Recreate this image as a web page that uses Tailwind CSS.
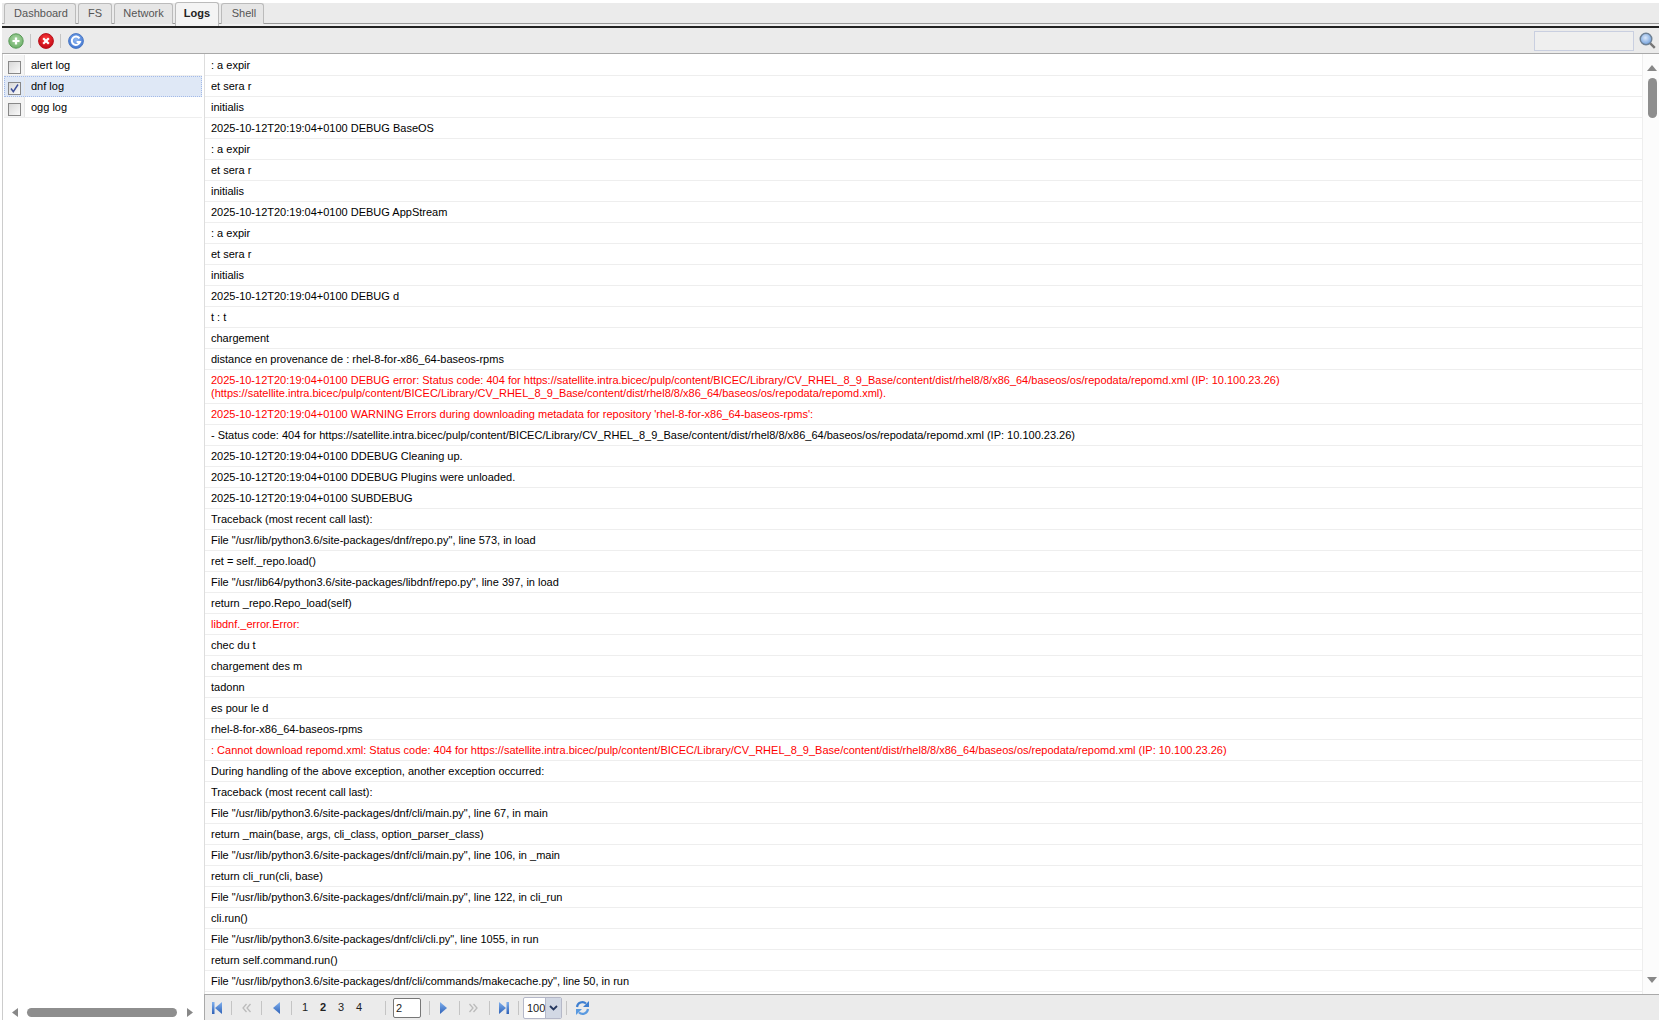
<!DOCTYPE html>
<html lang="en">
<head>
    <meta charset="UTF-8">
    <title>Logs</title>
    <script src="https://cdn.jsdelivr.net/npm/@tailwindcss/browser@4"></script>
</head>
<body class="h-screen overflow-hidden bg-white font-['Liberation_Sans',Arial,sans-serif] text-[11px] text-black">
    <svg width="0" height="0" class="absolute">
        <defs>
            <radialGradient id="gGreen" cx="50%" cy="40%" r="60%"><stop offset="0" stop-color="#b4dcae"/><stop offset="1" stop-color="#6aae66"/></radialGradient>
            <radialGradient id="gRed" cx="50%" cy="35%" r="65%"><stop offset="0" stop-color="#ff3a3a"/><stop offset="1" stop-color="#c00814"/></radialGradient>
            <radialGradient id="gBlue" cx="50%" cy="40%" r="60%"><stop offset="0" stop-color="#8fb8f2"/><stop offset="1" stop-color="#3f74d0"/></radialGradient>
            <radialGradient id="gGlass" cx="45%" cy="40%" r="60%"><stop offset="0" stop-color="#dbe8fa"/><stop offset="1" stop-color="#6f9fdc"/></radialGradient>
            <linearGradient id="gPager" x1="0" y1="0" x2="0" y2="1"><stop offset="0" stop-color="#7fb0ee"/><stop offset="1" stop-color="#2f62b8"/></linearGradient>
        </defs>
    </svg>

    <!-- Tabs -->
    <div class="h-[25px] mt-[3px] ml-[2px] bg-[#ebebeb] border-b-2 border-[#222] flex items-end pl-[2px] gap-[2px] text-[#555] [box-shadow:inset_0_-2px_0_#f0f0f0,inset_0_-3px_0_#999]">
        <div class="w-[72px] h-[21px] mb-[2px] pb-[1px] pl-[2px] flex items-center justify-center bg-[#e6e6e6] border border-b-0 border-[#bbb] rounded-t-[3px]">Dashboard</div>
        <div class="w-[34px] h-[21px] mb-[2px] pb-[1px] flex items-center justify-center bg-[#e6e6e6] border border-b-0 border-[#bbb] rounded-t-[3px]">FS</div>
        <div class="w-[59px] h-[21px] mb-[2px] pb-[1px] flex items-center justify-center bg-[#e6e6e6] border border-b-0 border-[#bbb] rounded-t-[3px]">Network</div>
        <div class="w-[44px] h-[24px] pb-[3px] flex items-center justify-center bg-[#f4f4f4] border border-b-0 border-[#bbb] rounded-t-[3px] font-bold text-[#222]">Logs</div>
        <div class="w-[43px] h-[21px] mb-[2px] pb-[1px] pl-[3px] flex items-center justify-center bg-[#e6e6e6] border border-b-0 border-[#bbb] rounded-t-[3px]">Shell</div>
    </div>

    <!-- Toolbar -->
    <div class="h-[26px] ml-[2px] bg-[#ebebeb] border-b border-[#a9a9a9] flex items-center pl-[6px]">
        <svg width="16" height="16" viewBox="0 0 16 16"><circle cx="8" cy="8" r="7.200" fill="url(#gGreen)" stroke="#5a9a58"/><path d="M8 4.500v7M4.500 8h7" stroke="#fff" stroke-width="2.200"/></svg>
        <div class="w-px h-[14px] bg-[#c4c4c4] ml-[6px] mr-[7px]"></div>
        <svg width="16" height="16" viewBox="0 0 16 16"><circle cx="8" cy="8" r="7.400" fill="url(#gRed)" stroke="#b8121c"/><path d="M5.200 5.200l5.600 5.600M10.800 5.200l-5.600 5.600" stroke="#fff" stroke-width="2.200"/></svg>
        <div class="w-px h-[14px] bg-[#c4c4c4] ml-[6px] mr-[7px]"></div>
        <svg width="16" height="16" viewBox="0 0 16 16"><circle cx="8" cy="8" r="7.400" fill="url(#gBlue)" stroke="#4a78c4"/><path d="M11.500 5.400A4.200 4.200 0 1 0 12 9H8.600" fill="none" stroke="#fff" stroke-width="2"/></svg>
        <div class="ml-auto w-[100px] h-[20px] bg-[#efefef] border border-[#c9cfe0]"></div>
        <svg class="ml-[5px] mr-[3px]" width="17" height="17" viewBox="0 0 17 17"><path d="M10.800 10.800l5 5" stroke="#777" stroke-width="2.400"/><circle cx="7" cy="7" r="5.800" fill="url(#gGlass)" stroke="#6e8094" stroke-width="1.400"/></svg>
    </div>

    <div class="flex h-[966px]">
        <!-- Left list -->
        <div class="w-[201px] ml-[2px] border-l border-[#ccc] flex flex-col shrink-0">
            <div class="flex-1 pl-[1px] pr-[1px] pt-[1px]">
                <div class="h-[21px] flex border-b border-[#eee]">
                    <div class="w-[21px] pt-[4px] bg-[#f5f5f5] border-r border-[#e5e5e5] flex items-center justify-center"><span class="w-[13px] h-[13px] border border-[#888] bg-linear-to-br from-[#d8d8d8] to-[#fafafa]"></span></div>
                    <div class="pl-[6px] leading-[20px]">alert log</div>
                </div>
                <div class="h-[21px] flex bg-[#dfe8f6] border border-dotted border-[#a3bae9]">
                    <div class="w-[20px] pt-[3px] bg-[#dfe8f6] border-r border-[#e5e5e5] flex items-center justify-center"><span class="w-[13px] h-[13px] border border-[#888] bg-linear-to-br from-[#d8d8d8] to-[#fafafa] flex"><svg width="11" height="11" viewBox="0 0 11 11"><path d="M2 5.500l2.300 3.200L9 1.500" fill="none" stroke="#3d4f9a" stroke-width="1.500"/></svg></span></div>
                    <div class="pl-[6px] leading-[19px]">dnf log</div>
                </div>
                <div class="h-[21px] flex border-b border-[#eee]">
                    <div class="w-[21px] pt-[4px] bg-[#f5f5f5] border-r border-[#e5e5e5] flex items-center justify-center"><span class="w-[13px] h-[13px] border border-[#888] bg-linear-to-br from-[#d8d8d8] to-[#fafafa]"></span></div>
                    <div class="pl-[6px] leading-[20px]">ogg log</div>
                </div>
            </div>
            <!-- horizontal scrollbar -->
            <div class="h-[14px] mb-[1px] flex items-center pl-[9px] gap-[9px]">
                <svg width="6" height="9" viewBox="0 0 6 9"><path d="M6 0v9L0 4.500z" fill="#888"/></svg>
                <div class="w-[150px] h-[9px] rounded-full bg-[#8e8e8e]"></div>
                <svg class="ml-[1px]" width="6" height="9" viewBox="0 0 6 9"><path d="M0 0v9l6-4.500z" fill="#888"/></svg>
            </div>
        </div>

        <!-- Log grid -->
        <div class="flex-1 min-w-0 flex flex-col ml-[1px]">
            <div class="flex flex-1 min-h-0 border-l border-[#ddd]">
                <div id="rows" class="flex-1 min-w-0 overflow-hidden pt-[1px]"></div>
                <div class="w-[17px] shrink-0 bg-[#fcfcfc] border-l border-[#eee] pl-[2px] flex flex-col items-center pt-[11px] relative">
                    <svg width="10" height="6" viewBox="0 0 10 6"><path d="M0 6h10L5 0z" fill="#888"/></svg>
                    <div class="w-[9px] h-[40px] mt-[7px] rounded-full bg-[#8e8e8e]"></div>
                    <svg class="absolute bottom-[11px]" width="10" height="6" viewBox="0 0 10 6"><path d="M0 0h10L5 6z" fill="#888"/></svg>
                </div>
            </div>
            <!-- Pager -->
            <div class="h-[26px] bg-[#ebebeb] border-t border-l border-[#a9a9a9] flex items-center pl-[7px] text-[#222]">
                <svg width="10" height="14" viewBox="0 0 10 14"><path d="M0 1h2.500v12H0z" fill="url(#gPager)"/><path d="M10 1v12L3 7z" fill="url(#gPager)"/></svg>
                <div class="w-px h-[14px] bg-[#c4c4c4] ml-[9px] mr-[10px]"></div>
                <svg width="9" height="10" viewBox="0 0 9 10"><path d="M4.500 1L1 5l3.500 4M8.500 1L5 5l3.500 4" fill="none" stroke="#bbb" stroke-width="1.300"/></svg>
                <div class="w-px h-[14px] bg-[#c4c4c4] ml-[10px] mr-[11px]"></div>
                <svg width="7" height="14" viewBox="0 0 7 14"><path d="M7 1v12L0 7z" fill="url(#gPager)"/></svg>
                <div class="w-px h-[14px] bg-[#c4c4c4] ml-[11px] mr-[4px]"></div>
                <span class="w-[18px] text-center">1</span><span class="w-[18px] text-center font-bold">2</span><span class="w-[18px] text-center">3</span><span class="w-[18px] text-center">4</span>
                <div class="w-px h-[14px] bg-[#c4c4c4] ml-[17px] mr-[7px]"></div>
                <div class="w-[28px] h-[20px] bg-white border border-[#777] rounded-[2px] pl-[2px] leading-[18px]">2</div>
                <div class="w-px h-[14px] bg-[#c4c4c4] ml-[8px] mr-[10px]"></div>
                <svg width="7" height="14" viewBox="0 0 7 14"><path d="M0 1v12l7-6z" fill="url(#gPager)"/></svg>
                <div class="w-px h-[14px] bg-[#c4c4c4] ml-[12px] mr-[9px]"></div>
                <svg width="9" height="10" viewBox="0 0 9 10"><path d="M.5 1L4 5 .5 9M4.500 1L8 5 4.500 9" fill="none" stroke="#bbb" stroke-width="1.300"/></svg>
                <div class="w-px h-[14px] bg-[#c4c4c4] ml-[11px] mr-[9px]"></div>
                <svg width="10" height="14" viewBox="0 0 10 14"><path d="M0 1v12l7-6z" fill="url(#gPager)"/><path d="M7.500 1H10v12H7.500z" fill="url(#gPager)"/></svg>
                <div class="w-px h-[14px] bg-[#c4c4c4] ml-[9px] mr-[4px]"></div>
                <div class="w-[39px] h-[22px] flex bg-white border border-[#b5b8c8] rounded-[2px] overflow-hidden">
                    <div class="w-[21px] pl-[3px] leading-[20px] overflow-hidden whitespace-nowrap">100</div>
                    <div class="flex-1 bg-[#d2d8e4] border-l border-[#b5b8c8] flex items-center justify-center"><svg width="9" height="6" viewBox="0 0 9 6"><path d="M1 1l3.500 3.500L8 1" fill="none" stroke="#25375f" stroke-width="1.800"/></svg></div>
                </div>
                <div class="w-px h-[14px] bg-[#c4c4c4] ml-[4px] mr-[8px]"></div>
                <svg width="15" height="16" viewBox="0 0 15 16"><path d="M2 7a5.500 5.500 0 0 1 9-3.500" fill="none" stroke="#3f7fd0" stroke-width="2.200"/><path d="M14 1v6H8z" fill="#3f7fd0"/><path d="M13 9a5.500 5.500 0 0 1-9 3.500" fill="none" stroke="#5a9ae0" stroke-width="2.200"/><path d="M1 15V9h6z" fill="#5a9ae0"/></svg>
            </div>
        </div>
    </div>

    <script>
        const R = 'red';
        const logRows = [
            ': a expir', 'et sera r', 'initialis', '2025-10-12T20:19:04+0100 DEBUG BaseOS',
            ': a expir', 'et sera r', 'initialis', '2025-10-12T20:19:04+0100 DEBUG AppStream',
            ': a expir', 'et sera r', 'initialis', '2025-10-12T20:19:04+0100 DEBUG d',
            't : t', 'chargement', 'distance en provenance de : rhel-8-for-x86_64-baseos-rpms',
            [R, '2025-10-12T20:19:04+0100 DEBUG error: Status code: 404 for https://satellite.intra.bicec/pulp/content/BICEC/Library/CV_RHEL_8_9_Base/content/dist/rhel8/8/x86_64/baseos/os/repodata/repomd.xml (IP: 10.100.23.26)<br>(https://satellite.intra.bicec/pulp/content/BICEC/Library/CV_RHEL_8_9_Base/content/dist/rhel8/8/x86_64/baseos/os/repodata/repomd.xml).'],
            [R, "2025-10-12T20:19:04+0100 WARNING Errors during downloading metadata for repository 'rhel-8-for-x86_64-baseos-rpms':"],
            '- Status code: 404 for https://satellite.intra.bicec/pulp/content/BICEC/Library/CV_RHEL_8_9_Base/content/dist/rhel8/8/x86_64/baseos/os/repodata/repomd.xml (IP: 10.100.23.26)',
            '2025-10-12T20:19:04+0100 DDEBUG Cleaning up.',
            '2025-10-12T20:19:04+0100 DDEBUG Plugins were unloaded.',
            '2025-10-12T20:19:04+0100 SUBDEBUG',
            'Traceback (most recent call last):',
            'File "/usr/lib/python3.6/site-packages/dnf/repo.py", line 573, in load',
            'ret = self._repo.load()',
            'File "/usr/lib64/python3.6/site-packages/libdnf/repo.py", line 397, in load',
            'return _repo.Repo_load(self)',
            [R, 'libdnf._error.Error:'],
            'chec du t', 'chargement des m', 'tadonn', 'es pour le d', 'rhel-8-for-x86_64-baseos-rpms',
            [R, ': Cannot download repomd.xml: Status code: 404 for https://satellite.intra.bicec/pulp/content/BICEC/Library/CV_RHEL_8_9_Base/content/dist/rhel8/8/x86_64/baseos/os/repodata/repomd.xml (IP: 10.100.23.26)'],
            'During handling of the above exception, another exception occurred:',
            'Traceback (most recent call last):',
            'File "/usr/lib/python3.6/site-packages/dnf/cli/main.py", line 67, in main',
            'return _main(base, args, cli_class, option_parser_class)',
            'File "/usr/lib/python3.6/site-packages/dnf/cli/main.py", line 106, in _main',
            'return cli_run(cli, base)',
            'File "/usr/lib/python3.6/site-packages/dnf/cli/main.py", line 122, in cli_run',
            'cli.run()',
            'File "/usr/lib/python3.6/site-packages/dnf/cli/cli.py", line 1055, in run',
            'return self.command.run()',
            'File "/usr/lib/python3.6/site-packages/dnf/cli/commands/makecache.py", line 50, in run'
        ];
        document.getElementById('rows').innerHTML = logRows.map(r => {
            const red = Array.isArray(r);
            return `<div class="px-[6px] pt-[4px] pb-[3px] leading-[13px] min-h-[21px] border-b border-[#eee] ${red ? 'text-[#ff0000]' : ''}">${red ? r[1] : r}</div>`;
        }).join('');
    </script>
</body>
</html>
